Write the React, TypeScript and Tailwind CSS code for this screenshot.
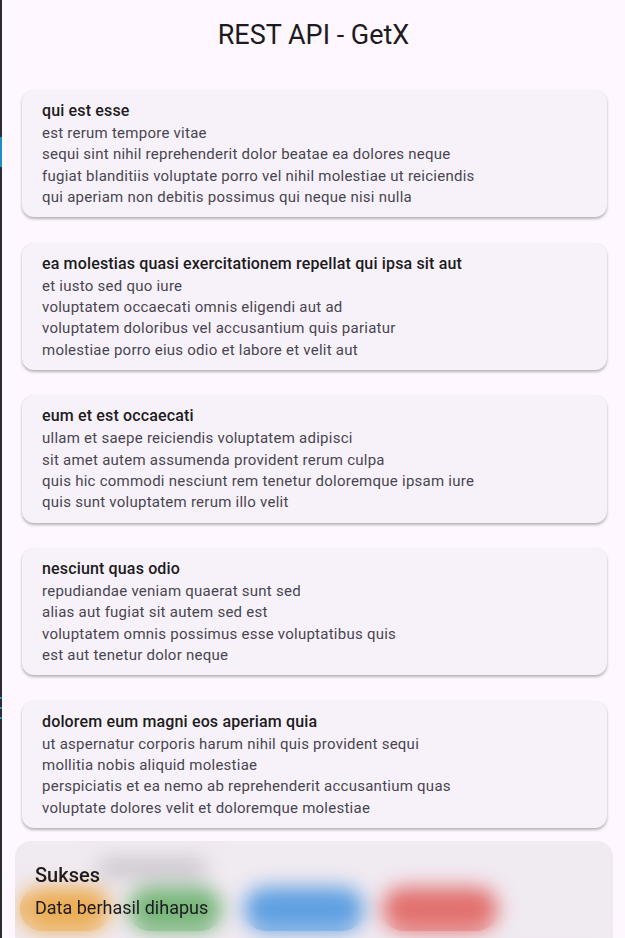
import React from "react";

const posts = [
  {
    title: "qui est esse",
    body: [
      "est rerum tempore vitae",
      "sequi sint nihil reprehenderit dolor beatae ea dolores neque",
      "fugiat blanditiis voluptate porro vel nihil molestiae ut reiciendis",
      "qui aperiam non debitis possimus qui neque nisi nulla",
    ],
  },
  {
    title: "ea molestias quasi exercitationem repellat qui ipsa sit aut",
    body: [
      "et iusto sed quo iure",
      "voluptatem occaecati omnis eligendi aut ad",
      "voluptatem doloribus vel accusantium quis pariatur",
      "molestiae porro eius odio et labore et velit aut",
    ],
  },
  {
    title: "eum et est occaecati",
    body: [
      "ullam et saepe reiciendis voluptatem adipisci",
      "sit amet autem assumenda provident rerum culpa",
      "quis hic commodi nesciunt rem tenetur doloremque ipsam iure",
      "quis sunt voluptatem rerum illo velit",
    ],
  },
  {
    title: "nesciunt quas odio",
    body: [
      "repudiandae veniam quaerat sunt sed",
      "alias aut fugiat sit autem sed est",
      "voluptatem omnis possimus esse voluptatibus quis",
      "est aut tenetur dolor neque",
    ],
  },
  {
    title: "dolorem eum magni eos aperiam quia",
    body: [
      "ut aspernatur corporis harum nihil quis provident sequi",
      "mollitia nobis aliquid molestiae",
      "perspiciatis et ea nemo ab reprehenderit accusantium quas",
      "voluptate dolores velit et doloremque molestiae",
    ],
  },
];

function PostCard({ title, body }: { title: string; body: string[] }) {
  return (
    <div className="rounded-[12px] bg-[#f7f2fa] px-[20px] pt-[9px] pb-[9px] shadow-[0_2px_3px_rgba(0,0,0,0.28),0_0_1px_rgba(0,0,0,0.08)]">
      <div className="text-[16px] leading-[24px] font-medium tracking-[0.15px] text-[#1d1b20]">
        {title}
      </div>
      {body.map((line, i) => (
        <div
          key={i}
          className="text-[15px] leading-[21.3px] tracking-[0.25px] text-[#49454f]"
        >
          {line}
        </div>
      ))}
    </div>
  );
}

export default function App() {
  return (
    <div
      className="relative flex h-[938px] w-full overflow-hidden bg-[#fef7ff]"
      style={{ fontFamily: "Roboto, 'Liberation Sans', sans-serif" }}
    >
      {/* window edge */}
      <div className="flex w-[2px] shrink-0 flex-col bg-[#2c2c31]">
        <div className="mt-[137px] h-[30px] bg-[#1f8fc8]" />
        <div className="mt-[530px] h-[2px] bg-[#1f8fc8]" />
        <div className="mt-[8px] h-[2px] bg-[#1f8fc8]" />
        <div className="mt-[8px] h-[2px] bg-[#1f8fc8]" />
      </div>

      <div className="flex flex-1 flex-col">
        <div className="flex h-[70px] shrink-0 items-center justify-center text-[27px] text-[#1d1b20]">
          REST API - GetX
        </div>

        <div className="ml-[20px] mr-[18px] flex flex-col gap-[25.5px] pt-[20px]">
          {posts.map((p) => (
            <PostCard key={p.title} title={p.title} body={p.body} />
          ))}
        </div>

        <div className="mt-[30px] ml-[95px] h-[20px] w-[110px] rounded-full bg-[#c6c1c8]" />
        <div className="mt-[9px] ml-[18px] flex">
          <div className="h-[44px] w-[90px] rounded-full bg-[#f79a10]" />
          <div className="ml-[18px] h-[44px] w-[94px] rounded-full bg-[#44a848]" />
          <div className="ml-[22px] h-[44px] w-[120px] rounded-full bg-[#1f86e8]" />
          <div className="ml-[18px] h-[44px] w-[116px] rounded-full bg-[#e83e36]" />
        </div>
      </div>

      {/* snackbar */}
      <div className="absolute top-[841px] left-[15px] flex h-[120px] w-[598px] flex-col rounded-[16px] bg-[#d6d1d7]/35 px-[20px] pt-[21px] backdrop-blur-[10px]">
        <div className="text-[20px] leading-[26px] font-medium text-[#1d1b20]">
          Sukses
        </div>
        <div className="mt-[8px] text-[18px] leading-[24px] text-[#1d1b20]">
          Data berhasil dihapus
        </div>
      </div>
    </div>
  );
}
